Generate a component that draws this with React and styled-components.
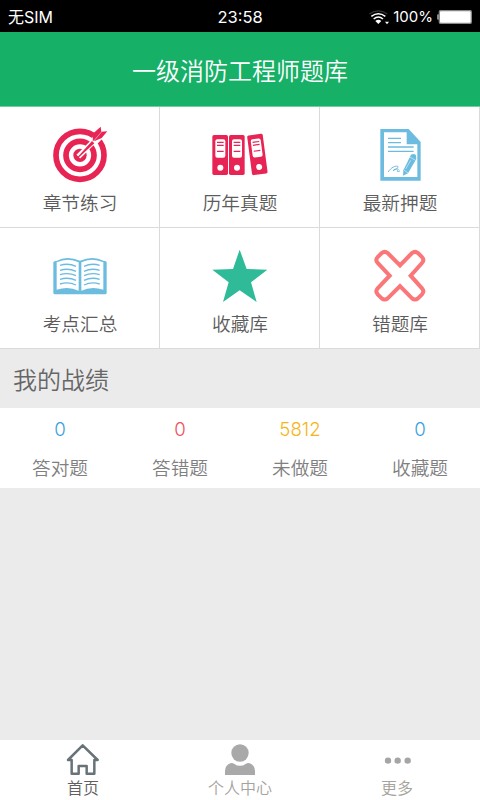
import React from "react";
import styled, { createGlobalStyle } from "styled-components";

const GlobalStyle = createGlobalStyle`
  * { box-sizing: border-box; }
  body {
    margin: 0;
    background: #ebebeb;
    font-family: Inter, "Noto Sans CJK SC", sans-serif;
    font-weight: 350;
  }
  svg { display: block; }
`;

const Screen = styled.div`
  display: flex;
  flex-direction: column;
  width: 480px;
  height: 800px;
  overflow: hidden;
  background: #ebebeb;
`;

const StatusBar = styled.div`
  display: grid;
  grid-template-columns: 1fr auto 1fr;
  align-items: center;
  height: 32px;
  padding: 2px 8px 0 8px;
  background: #000;
  color: #fff;
  font-size: 16px;
  font-weight: 400;
  line-height: 30px;
`;

const Clock = styled.span`
  font-size: 16.5px;
`;

const StatusRight = styled.div`
  display: flex;
  align-items: center;
  justify-content: flex-end;
  font-size: 15px;
  gap: 4px;
`;

const Header = styled.header`
  display: flex;
  align-items: center;
  justify-content: center;
  height: 75px;
  border-bottom: 1px solid #6fcd9e;
  background: #16b067;
  color: #fff;
  font-size: 24px;
`;

const MenuGrid = styled.div`
  display: grid;
  grid-template-columns: repeat(3, 160px);
  grid-auto-rows: 121px;
`;

const MenuCell = styled.div`
  display: flex;
  flex-direction: column;
  align-items: center;
  padding-top: 16px;
  background: #fff;
  box-shadow: inset -1px -1px 0 #dadada;
`;

const MenuLabel = styled.span`
  margin-top: 9px;
  color: #5c5c5c;
  font-size: 18.67px;
  line-height: 24px;
`;

const SectionTitle = styled.h2`
  margin: 0;
  height: 59px;
  padding-left: 13px;
  color: #666;
  font-size: 24px;
  font-weight: 350;
  line-height: 63px;
`;

const Stats = styled.div`
  display: grid;
  grid-template-columns: repeat(4, 120px);
  height: 80px;
  background: #fff;
`;

const Stat = styled.div`
  display: flex;
  flex-direction: column;
  align-items: center;
  color: #808080;
  font-size: 18.67px;
  line-height: 42px;
`;

const StatValue = styled.span`
  height: 40px;
  color: ${(p) => p.$color};
  font-weight: 300;
  line-height: 43px;
`;

const TabBar = styled.nav`
  display: grid;
  grid-template-columns: repeat(3, 157px);
  justify-content: center;
  height: 60px;
  margin-top: auto;
  background: #fff;
`;

const Tab = styled.div`
  display: flex;
  flex-direction: column;
  align-items: center;
  padding-top: 3px;
  color: ${(p) => (p.$active ? "#606060" : "#a5a39b")};
  font-size: 16px;
  line-height: 20px;

  span { margin-top: 3px; }
`;

const MenuSvg = ({ children }) => (
  <svg width="60" height="60" viewBox="150 51 180 180">{children}</svg>
);

const TargetIcon = () => (
  <MenuSvg>
    <g fill="none" stroke="#e72453">
      <circle cx="240" cy="148" r="72" strokeWidth="17" />
      <circle cx="240" cy="148" r="42" strokeWidth="17" />
    </g>
    <circle cx="240" cy="148" r="20" fill="#e72453" />
    <path d="M235 152L290 97" stroke="#fff" strokeWidth="16" />
    <path d="M274 100L301 56L328 78L289 116Z" fill="#fff" />
    <path d="M233 153L276 105L283 112L237 154Z" fill="#e72453" />
    <path d="M278 104L280 82L302 62L304 77L322 76L305 96L286 104Z" fill="#e72453" />
    <path d="M282 104L306 76" stroke="#fff" strokeWidth="1.5" />
  </MenuSvg>
);

const Binder = ({ transform }) => (
  <g transform={transform}>
    <rect width="47" height="120" rx="5" fill="#e72453" />
    <rect x="9" y="13" width="30" height="55" rx="6" fill="#fff" />
    <path d="M14 22H34M14 31H34M14 49H34" stroke="#e72453" strokeWidth="3.5" />
    <circle cx="24" cy="98" r="9" fill="#fff" />
  </g>
);

const BindersIcon = () => (
  <MenuSvg>
    <Binder transform="translate(157 87)" />
    <Binder transform="translate(207 87)" />
    <Binder transform="translate(261 89) rotate(-7.5)" />
  </MenuSvg>
);

const DocumentIcon = () => (
  <MenuSvg>
    <path d="M181 69H266L302 108V224H181Z" fill="#6cbce0" />
    <path d="M192 79H260V115H292V213H192Z" fill="#fff" />
    <path d="M204 97H243M204 110H243M204 123H281M204 136H281" stroke="#6cbce0" strokeWidth="4" />
    <g fill="none" stroke="#6cbce0" strokeWidth="3" strokeLinecap="round">
      <path d="M205 197C214 184 225 179 233 181C240 185 222 190 219 194C229 188 239 187 233 193C229 198 234 197 239 195" />
    </g>
    <path d="M273 146Q282 141 288 148L289 159L264 202L249 209L250 193Z" fill="#6cbce0" />
    <path d="M269 153L287 163M252 192L264 201M272 163L257 189" stroke="#d8f0fa" strokeWidth="2" />
  </MenuSvg>
);

const BookIcon = () => (
  <MenuSvg>
    <path d="M160 105Q163 102 169 102Q201 85 240 101Q279 85 312 102Q320 102 320 106V198Q320 202 316 202H164Q160 202 160 198Z" fill="#6cbce0" />
    <path d="M170 106Q205 91 236 106V191Q206 177 170 188ZM244 106Q275 91 310 106V188Q274 177 244 191Z" fill="#fff" />
    <g fill="none" stroke="#6cbce0" strokeWidth="4">
      {[115, 130, 143, 157, 171].map((y) => (
        <path key={y} d={`M180 ${y}Q205 ${y - 8} 228 ${y + 3}M252 ${y + 3}Q275 ${y - 8} 299 ${y}`} />
      ))}
    </g>
  </MenuSvg>
);

const StarIcon = () => (
  <MenuSvg>
    <path d="M239 68L260 126L322 128L273 166L290 225L239 190L189 225L206 166L157 128L219 126Z" fill="#2fba98" />
  </MenuSvg>
);

const CrossIcon = () => (
  <MenuSvg>
    <path
      d="M185 78Q194 71 203 78L240 115L276 78Q285 71 294 78L306 90Q314 99 306 108L272 146L306 184Q314 193 306 202L294 214Q285 221 276 214L240 177L203 214Q194 221 185 214L173 202Q165 193 173 184L209 146L173 108Q165 99 173 90Z"
      fill="#fff"
      stroke="#fb7678"
      strokeWidth="12"
    />
  </MenuSvg>
);

const WifiIcon = () => (
  <svg width="20" height="15" viewBox="0 0 60 45" fill="none">
    <path d="M1 12Q28 -7 55 12" stroke="#333" strokeWidth="4" />
    <path d="M7 19Q28 3 49 19M14 27Q28 15 42 27" stroke="#fff" strokeWidth="4.5" />
    <path d="M19 33Q28 25 37 33L28 42Z" fill="#fff" />
    <path d="M48 35H60L54 43Z" fill="#fff" />
  </svg>
);

const BatteryIcon = () => (
  <svg width="35" height="14" viewBox="0 0 105 42">
    <rect x="0" y="13" width="7" height="16" rx="3" fill="#888" />
    <rect x="7" y="1.5" width="96" height="39" rx="5" fill="#fff" stroke="#888" strokeWidth="4" />
  </svg>
);

const HomeIcon = () => (
  <svg width="34" height="32" viewBox="198 40 102 96">
    <path d="M204 91L248 47L293 91H283V132H260V109H236V132H215V91Z" fill="none" stroke="#687378" strokeWidth="7.5" strokeLinejoin="round" />
  </svg>
);

const PersonIcon = () => (
  <svg width="34" height="32" viewBox="0 0 102 96">
    <circle cx="51" cy="30" r="26" fill="#a9a9a9" />
    <path d="M6 98V84Q6 68 22 61Q28 59 33 62Q51 75 69 62Q74 59 80 61Q96 68 96 84V98Z" fill="#a9a9a9" />
  </svg>
);

const MoreIcon = () => (
  <svg width="34" height="32" viewBox="0 0 102 96" fill="#a5a5a5">
    <circle cx="24" cy="53" r="9.5" />
    <circle cx="53" cy="53" r="9.5" />
    <circle cx="83" cy="53" r="9.5" />
  </svg>
);

const menu = [
  ["章节练习", TargetIcon],
  ["历年真题", BindersIcon],
  ["最新押题", DocumentIcon],
  ["考点汇总", BookIcon],
  ["收藏库", StarIcon],
  ["错题库", CrossIcon],
];

const stats = [
  ["0", "答对题", "#3b9fe0"],
  ["0", "答错题", "#f0525c"],
  ["5812", "未做题", "#f8b414"],
  ["0", "收藏题", "#3b9fe0"],
];

const tabs = [
  ["首页", HomeIcon],
  ["个人中心", PersonIcon],
  ["更多", MoreIcon],
];

export default function App() {
  return (
    <Screen>
      <GlobalStyle />
      <StatusBar>
        <span>无SIM</span>
        <Clock>23:58</Clock>
        <StatusRight>
          <WifiIcon />
          <span>100%</span>
          <BatteryIcon />
        </StatusRight>
      </StatusBar>
      <Header>一级消防工程师题库</Header>
      <MenuGrid>
        {menu.map(([label, Icon]) => (
          <MenuCell key={label}>
            <Icon />
            <MenuLabel>{label}</MenuLabel>
          </MenuCell>
        ))}
      </MenuGrid>
      <SectionTitle>我的战绩</SectionTitle>
      <Stats>
        {stats.map(([value, label, color]) => (
          <Stat key={label}>
            <StatValue $color={color}>{value}</StatValue>
            <span>{label}</span>
          </Stat>
        ))}
      </Stats>
      <TabBar>
        {tabs.map(([label, Icon], i) => (
          <Tab key={label} $active={i === 0}>
            <Icon />
            <span>{label}</span>
          </Tab>
        ))}
      </TabBar>
    </Screen>
  );
}
